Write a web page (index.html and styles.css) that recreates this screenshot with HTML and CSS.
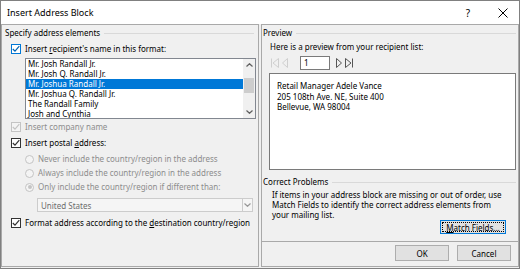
FILE: index.html
```html
<!DOCTYPE html>
<html lang="en">
  <head>
    <meta charset="UTF-8" />
    <title>Insert Address Block</title>
    <link rel="stylesheet" href="styles.css">
  </head>
  <body>
    <div class="dialog">
      <!-- Title bar -->
      <div class="titlebar">
        <span class="title">Insert Address Block</span>
        <span class="help">?</span>
        <span class="close">
          <svg width="10" height="10" viewBox="0 0 10 10"><path d="M0.5 0.5 L9.5 9.5 M9.5 0.5 L0.5 9.5" stroke="#000" stroke-width="1" fill="none"/></svg>
        </span>
      </div>

      <div class="content">
        <!-- Left: address elements -->
        <div class="panel panel-left">
          <div class="heading">Specify address elements</div>

          <div class="row row-first">
            <span class="box focus"><svg width="8" height="8" viewBox="0 0 8 8"><path d="M0.8 4 L3 6.2 L7.3 1.2" /></svg></span>
            <span>Insert <u>r</u>ecipient's name in this format:</span>
          </div>

          <div class="listbox">
            <ul class="items">
              <li>Mr. Josh Randall Jr.</li>
              <li>Mr. Josh Q. Randall Jr.</li>
              <li class="selected">Mr. Joshua Randall Jr.</li>
              <li>Mr. Joshua Q. Randall Jr.</li>
              <li>The Randall Family</li>
              <li>Josh and Cynthia</li>
            </ul>
            <div class="scrollbar">
              <span class="arrow"><svg width="7" height="4" viewBox="0 0 7 4"><path d="M0.5 3.5 L3.5 0.7 L6.5 3.5" /></svg></span>
              <span class="thumb"></span>
              <span class="arrow arrow-down"><svg width="7" height="4" viewBox="0 0 7 4"><path d="M0.5 0.5 L3.5 3.3 L6.5 0.5" /></svg></span>
            </div>
          </div>

          <div class="row row-company disabled">
            <span class="box"><svg width="8" height="8" viewBox="0 0 8 8"><path d="M0.8 4 L3 6.2 L7.3 1.2" /></svg></span>
            <span>Insert company name</span>
          </div>

          <div class="row row-postal">
            <span class="box"><svg width="8" height="8" viewBox="0 0 8 8"><path d="M0.8 4 L3 6.2 L7.3 1.2" /></svg></span>
            <span>Insert postal <u>a</u>ddress:</span>
          </div>

          <div class="row radio-row radio-first disabled">
            <span class="radio"></span>
            <span>Never include the country/region in the address</span>
          </div>
          <div class="row radio-row disabled">
            <span class="radio"></span>
            <span>Always include the country/region in the address</span>
          </div>
          <div class="row radio-row disabled">
            <span class="radio on"></span>
            <span>Only include the country/region if different than:</span>
          </div>

          <div class="dropdown">
            <span class="dropdown-value">United States</span>
            <span class="dropdown-btn"><svg width="7" height="4" viewBox="0 0 7 4"><path d="M0.5 0.5 L3.5 3.3 L6.5 0.5" /></svg></span>
          </div>

          <div class="row row-format">
            <span class="box"><svg width="8" height="8" viewBox="0 0 8 8"><path d="M0.8 4 L3 6.2 L7.3 1.2" /></svg></span>
            <span>Format address according to the <u>d</u>estination country/region</span>
          </div>
        </div>

        <!-- Right: preview, problems, actions -->
        <div class="panel panel-right">
          <div class="heading">Preview</div>
          <div class="hint">Here is a preview from your recipient list:</div>

          <div class="nav">
            <svg class="nav-icon off" width="8" height="10" viewBox="0 0 8 10"><path d="M0.5 0.5 V9.5 M7.5 0.5 L2 5 L7.5 9.5 Z" /></svg>
            <svg class="nav-icon off" width="6" height="10" viewBox="0 0 6 10"><path d="M5.5 0.5 L0.5 5 L5.5 9.5 Z" /></svg>
            <span class="record">1</span>
            <svg class="nav-icon" width="6" height="10" viewBox="0 0 6 10"><path d="M0.5 0.5 L5.5 5 L0.5 9.5 Z" /></svg>
            <svg class="nav-icon" width="8" height="10" viewBox="0 0 8 10"><path d="M0.5 0.5 L6 5 L0.5 9.5 Z M7.5 0.5 V9.5" /></svg>
          </div>

          <div class="preview-box">
            <div>Retail Manager Adele Vance</div>
            <div>205 108th Ave. NE, Suite 400</div>
            <div>Bellevue, WA 98004</div>
          </div>

          <div class="problems">
            <div class="heading">Correct Problems</div>
            <p class="problems-text">If items in your address block are missing or out of order, use Match Fields to identify the correct address elements from your mailing list.</p>
            <div class="problems-actions">
              <button class="btn btn-match"><span class="focus-ring"><u>M</u>atch Fields...</span></button>
            </div>
          </div>

          <div class="actions">
            <button class="btn">OK</button>
            <button class="btn">Cancel</button>
          </div>
        </div>
      </div>
    </div>
  </body>
</html>
```

FILE: styles.css
```css
body {
  margin: 0;
  font-family: "Noto Sans", "Open Sans", sans-serif;
  font-size: 8px;
  color: #000;
  background: #f0f0f0;
}

.dialog {
  width: 520px;
  height: 269px;
  box-sizing: border-box;
  border: 1px solid #808080;
  background: #f0f0f0;
  display: flex;
  flex-direction: column;
}

/* Title bar */
.titlebar {
  height: 23px;
  background: #fff;
  display: flex;
  align-items: center;
  padding-left: 6px;
  font-size: 9px;
}

.title {
  flex: 1;
}

.help {
  width: 12px;
  text-align: center;
  margin-right: 24px;
  font-size: 10px;
}

.close {
  width: 10px;
  height: 10px;
  margin-right: 11px;
  display: flex;
}

/* Main area */
.content {
  flex: 1;
  display: flex;
  gap: 2px;
  padding-bottom: 1px;
}

.panel {
  border: 1px solid #a9a9a9;
  display: flex;
  flex-direction: column;
}

.panel-left {
  width: 256px;
}

.panel-right {
  flex: 1;
}

.heading {
  height: 12px;
  line-height: 12px;
  margin-top: 2px;
  display: flex;
  align-items: center;
  gap: 4px;
  white-space: nowrap;
}

.heading::after {
  content: "";
  flex: 1;
  border-top: 1px solid #d9d9d9;
}

.panel-left > .heading {
  padding-left: 3px;
  margin-right: 4px;
}

.panel-right .heading {
  padding-left: 1px;
  margin-right: 2px;
}

/* Checkbox and radio rows */
.row {
  height: 10px;
  line-height: 10px;
  display: flex;
  align-items: center;
  gap: 4px;
  padding-left: 9px;
  white-space: nowrap;
}

.row-first { margin-top: 5px; }
.row-company { margin-top: 3px; }
.row-postal { margin-top: 6px; }
.radio-row { padding-left: 23px; margin-top: 4px; }
.radio-row.radio-first { margin-top: 6px; }
.row-format { margin-top: 6px; }

.box {
  width: 10px;
  height: 10px;
  box-sizing: border-box;
  border: 1px solid #333;
  background: #fff;
  display: flex;
  align-items: center;
  justify-content: center;
}

.box svg path {
  fill: none;
  stroke: #333;
  stroke-width: 1.2;
}

.box.focus {
  border-color: #0078d7;
}

.box.focus svg path {
  stroke: #0063b1;
}

.disabled {
  color: #8d8d8d;
}

.disabled .box {
  border-color: #c4c4c4;
  background: #f4f4f4;
}

.disabled .box svg path {
  stroke: #c4c4c4;
}

.radio {
  width: 9px;
  height: 9px;
  box-sizing: border-box;
  border: 1px solid #c4c4c4;
  border-radius: 50%;
  background: #f4f4f4;
  display: flex;
  align-items: center;
  justify-content: center;
}

.radio.on::after {
  content: "";
  width: 4px;
  height: 4px;
  border-radius: 50%;
  background: #c4c4c4;
}

/* List of name formats */
.listbox {
  margin: 4px 2px 0 23px;
  height: 61px;
  box-sizing: border-box;
  border: 1px solid #828790;
  background: #fff;
  display: flex;
}

.items {
  flex: 1;
  list-style: none;
  margin: 0;
  padding: 0;
  overflow: hidden;
}

.items li {
  height: 10px;
  line-height: 10px;
  padding-left: 2px;
  white-space: nowrap;
}

.items li.selected {
  background: #0078d7;
  color: #fff;
}

.scrollbar {
  width: 12px;
  background: #f0f0f0;
  display: flex;
  flex-direction: column;
  align-items: center;
}

.arrow {
  height: 12px;
  display: flex;
  align-items: center;
}

.arrow svg path,
.dropdown-btn svg path {
  fill: none;
  stroke: #606060;
  stroke-width: 1.2;
}

.thumb {
  width: 10px;
  height: 15px;
  margin-top: 7px;
  background: #cdcdcd;
}

.arrow-down {
  margin-top: auto;
}

/* Country dropdown */
.dropdown {
  margin: 6px 5px 0 35px;
  height: 14px;
  box-sizing: border-box;
  border: 1px solid #cccccc;
  background: #f5f5f5;
  display: flex;
  align-items: center;
  color: #6d6d6d;
}

.dropdown-value {
  flex: 1;
  padding-left: 3px;
}

.dropdown-btn {
  width: 10px;
  height: 12px;
  box-sizing: border-box;
  border-left: 1px solid #cccccc;
  display: flex;
  align-items: center;
  justify-content: center;
}

.dropdown-btn svg path {
  stroke: #999;
}

/* Preview */
.hint {
  margin-top: 3px;
  height: 10px;
  line-height: 10px;
  padding-left: 8px;
}

.nav {
  margin-top: 4px;
  height: 14px;
  display: flex;
  align-items: center;
  padding-left: 9px;
}

.nav-icon path {
  fill: none;
  stroke: #555;
  stroke-width: 1;
}

.nav-icon.off path {
  stroke: #cfcfcf;
}

.nav-icon + .nav-icon {
  margin-left: 3px;
}

.record {
  width: 30px;
  height: 14px;
  box-sizing: border-box;
  border: 1px solid #7a7a7a;
  background: #fff;
  margin: 0 6px 0 12px;
  padding-left: 3px;
  line-height: 12px;
}

.preview-box {
  margin: 3px 2px 0 7px;
  height: 97px;
  box-sizing: border-box;
  border: 1px solid #7a7a7a;
  background: #fff;
  padding: 7px 0 0 7px;
  line-height: 10.5px;
}

/* Correct problems */
.problems {
  margin-top: 4px;
  border-bottom: 1px solid #a9a9a9;
  padding-bottom: 7px;
}

.problems-text {
  margin: 2px 8px 0 10px;
  line-height: 9.8px;
}

.problems-actions {
  display: flex;
  justify-content: flex-end;
  margin-top: 1px;
  padding-right: 12px;
}

.btn {
  font-family: inherit;
  font-size: 8px;
  color: #000;
  background: #e1e1e1;
  border: 1px solid #adadad;
  height: 16px;
  width: 54px;
  padding: 0;
  margin: 0;
}

.btn-match {
  width: 66px;
  height: 14px;
  border-color: #0078d7;
  padding: 1px;
  display: flex;
}

.focus-ring {
  flex: 1;
  border: 1px dotted #000;
  line-height: 9px;
}

.actions {
  display: flex;
  justify-content: flex-end;
  gap: 8px;
  margin-top: 3px;
  padding-right: 7px;
}
```
